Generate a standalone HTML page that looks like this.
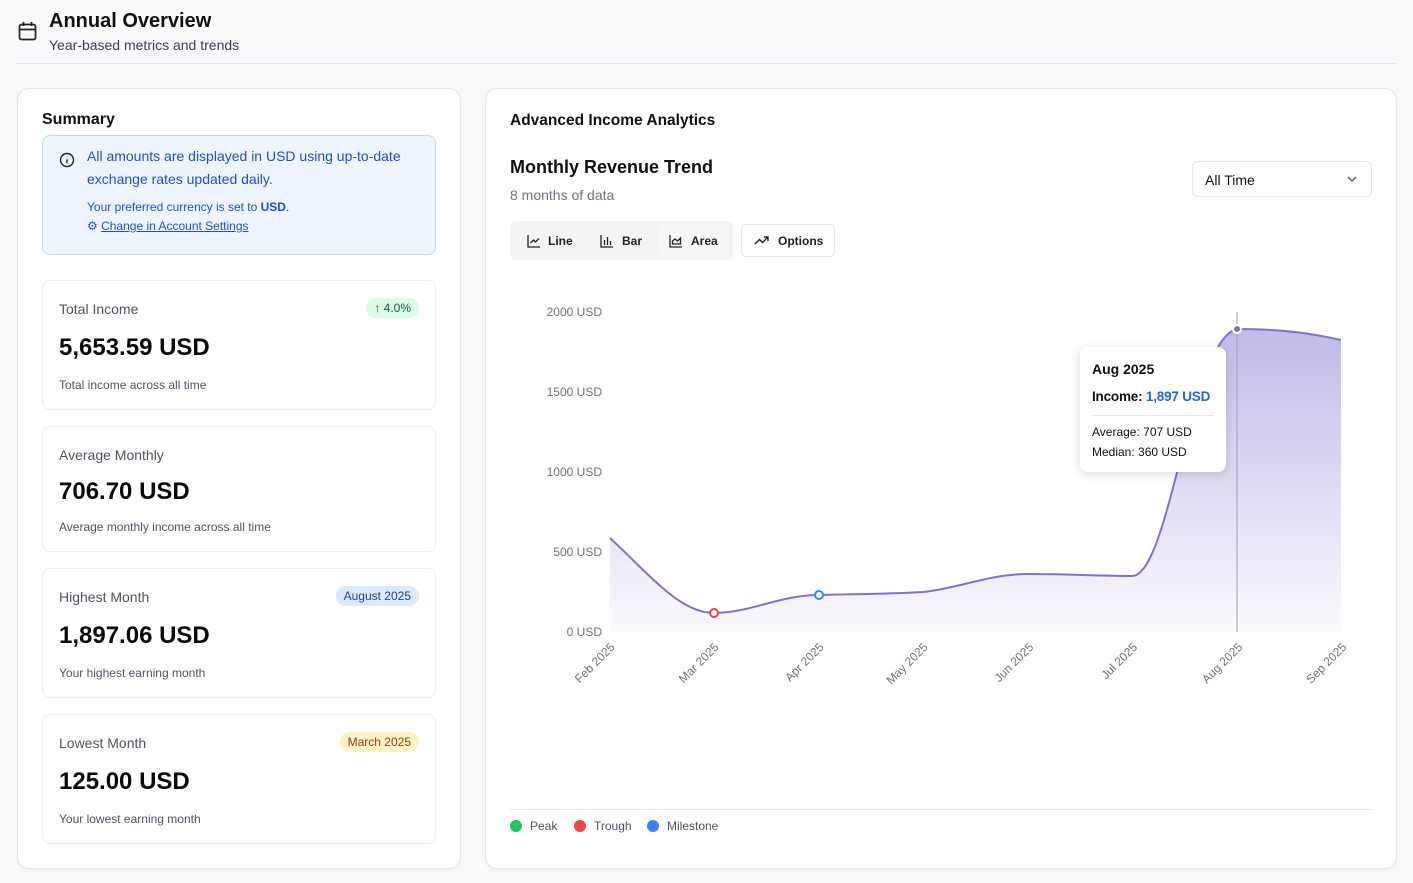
<!DOCTYPE html>
<html><head><meta charset="utf-8"><style>
*{box-sizing:border-box;margin:0;padding:0}
body{width:1413px;height:883px;background:#f9fafb;font-family:"Liberation Sans",sans-serif;color:#111;position:relative;overflow:hidden}
.abs{position:absolute}
.card{position:absolute;background:#fff;border:1px solid #e5e7eb;border-radius:12px;box-shadow:0 1px 3px rgba(0,0,0,.05)}
.stat{position:absolute;left:42px;width:394px;background:#fff;border:1px solid #eceef1;border-radius:8px}
.stat .l{position:absolute;left:16px;top:20px;font-size:14px;color:#4b5563}
.stat .v{position:absolute;left:16px;top:53px;font-size:24px;font-weight:bold;color:#0a0a0a}
.stat .d{position:absolute;left:16px;top:97px;font-size:12px;color:#4b5563}
.badge{position:absolute;right:16px;top:17px;font-size:12px;padding:3px 8px;border-radius:10px}
.ax{position:absolute;font-size:12px;color:#6b7280}
.xl{position:absolute;font-size:12px;color:#6b7280;transform:rotate(-45deg);transform-origin:right top;white-space:nowrap}
</style></head><body>
<svg class="abs" style="left:18px;top:21px" width="19" height="20" viewBox="0 0 19 20" fill="none" stroke="#222" stroke-width="1.7"><rect x="1.5" y="3.5" width="16" height="15" rx="2"/><path d="M1.5 8.5h16M5.5 1v4M13.5 1v4"/></svg>
<div class="abs" style="left:49px;top:10px;font-size:20px;font-weight:bold">Annual Overview</div>
<div class="abs" style="left:49px;top:37px;font-size:14px;color:#374151">Year-based metrics and trends</div>
<div class="abs" style="left:16px;top:63px;width:1381px;height:1px;background:#e5e7eb"></div>

<div class="card" style="left:17px;top:88px;width:444px;height:781px"></div>
<div class="abs" style="left:42px;top:111px;font-size:16px;font-weight:bold">Summary</div>
<div class="abs" style="left:42px;top:135px;width:394px;height:120px;background:#eef5fe;border:1px solid #bcd6f6;border-radius:8px"></div>
<svg class="abs" style="left:59px;top:152px" width="16" height="16" viewBox="0 0 16 16" fill="none" stroke="#222" stroke-width="1.4"><circle cx="8" cy="8" r="6.5"/><path d="M8 7.3v4M8 4.8v.5"/></svg>
<div class="abs" style="left:87px;top:145px;width:340px;font-size:14px;line-height:23px;color:#1d4ed8">All amounts are displayed in USD using up-to-date exchange rates updated daily.</div>
<div class="abs" style="left:87px;top:200px;font-size:12px;color:#1d4ed8">Your preferred currency is set to <b>USD</b>.</div>
<div class="abs" style="left:87px;top:219px;font-size:12px;color:#1d4ed8">⚙ <u>Change in Account Settings</u></div>

<div class="stat" style="top:280px;height:130px"><div class="l">Total Income</div><div class="badge" style="background:#dcfce7;color:#166534">↑ 4.0%</div><div class="v">5,653.59 USD</div><div class="d">Total income across all time</div></div>
<div class="stat" style="top:426px;height:126px"><div class="l">Average Monthly</div><div class="v" style="top:51px">706.70 USD</div><div class="d" style="top:93px">Average monthly income across all time</div></div>
<div class="stat" style="top:568px;height:130px"><div class="l">Highest Month</div><div class="badge" style="background:#dbeafe;color:#1e40af">August 2025</div><div class="v">1,897.06 USD</div><div class="d">Your highest earning month</div></div>
<div class="stat" style="top:714px;height:130px"><div class="l">Lowest Month</div><div class="badge" style="background:#fef3c7;color:#92400e">March 2025</div><div class="v">125.00 USD</div><div class="d">Your lowest earning month</div></div>

<div class="card" style="left:485px;top:88px;width:912px;height:781px"></div>
<div class="abs" style="left:510px;top:112px;font-size:15.5px;font-weight:bold">Advanced Income Analytics</div>
<div class="abs" style="left:510px;top:157px;font-size:18px;font-weight:bold;color:#111">Monthly Revenue Trend</div>
<div class="abs" style="left:510px;top:187px;font-size:14px;color:#6b7280">8 months of data</div>
<div class="abs" style="left:1192px;top:161px;width:180px;height:36px;border:1px solid #e5e7eb;border-radius:6px;background:#fff"><span style="position:absolute;left:12px;top:10px;font-size:14px">All Time</span><svg style="position:absolute;right:14px;top:14px" width="10" height="6" viewBox="0 0 10 6" fill="none" stroke="#555" stroke-width="1.4"><path d="M1 1l4 4 4-4"/></svg></div>
<div class="abs" style="left:510px;top:221px;width:223px;height:39px;background:#f3f4f6;border-radius:6px"></div>
<div class="abs" style="left:658px;top:224px;width:72px;height:33px;background:#f7f7f8;border-radius:5px"></div>
<svg class="abs" style="left:527px;top:234px" width="14" height="14" viewBox="0 0 14 14" fill="none" stroke="#222" stroke-width="1.3"><path d="M1 1v12h12M3.5 9l3-3 2 2 3.5-3.5"/></svg>
<div class="abs" style="left:548px;top:234px;font-size:12px;font-weight:bold;color:#222">Line</div>
<svg class="abs" style="left:600px;top:234px" width="14" height="14" viewBox="0 0 14 14" fill="none" stroke="#222" stroke-width="1.3"><path d="M1 1v12h12M4.5 6v5M7.5 3v8M10.5 7v4"/></svg>
<div class="abs" style="left:622px;top:234px;font-size:12px;font-weight:bold;color:#222">Bar</div>
<svg class="abs" style="left:669px;top:234px" width="14" height="14" viewBox="0 0 14 14" fill="none" stroke="#222" stroke-width="1.3"><path d="M1 1v12h12M3.5 10V7l2.5-2 2.5 2 3-3v6z"/></svg>
<div class="abs" style="left:691px;top:234px;font-size:12px;font-weight:bold;color:#222">Area</div>
<div class="abs" style="left:741px;top:224px;width:94px;height:33px;border:1px solid #e5e7eb;border-radius:5px;background:#fff"></div>
<svg class="abs" style="left:754px;top:235px" width="16" height="11" viewBox="0 0 16 11" fill="none" stroke="#222" stroke-width="1.4"><path d="M1 9l4.5-4.5 3 3L14 2M10 2h4v4"/></svg>
<div class="abs" style="left:778px;top:234px;font-size:12px;font-weight:bold;color:#222">Options</div>

<div class="ax" style="right:811px;top:305px">2000 USD</div>
<div class="ax" style="right:811px;top:385px">1500 USD</div>
<div class="ax" style="right:811px;top:465px">1000 USD</div>
<div class="ax" style="right:811px;top:545px">500 USD</div>
<div class="ax" style="right:811px;top:625px">0 USD</div>
<svg class="abs" style="left:0;top:0" width="1413" height="883">
<defs><linearGradient id="g" x1="0" y1="0" x2="0" y2="1"><stop offset="0" stop-color="#8b84d7" stop-opacity=".55"/><stop offset="1" stop-color="#8b84d7" stop-opacity=".04"/></linearGradient></defs>
<path d="M610 538 C650 575,680 613,714 613 C750 613,780 595,819 595 C860 594,890 594,923 592 C960 588,990 574,1028 574 C1070 574,1100 576,1132 576 C1170 576,1190 340,1237 329 C1280 329,1310 333,1341 340 L1341 632 L610 632Z" fill="url(#g)"/>
<path d="M610 538 C650 575,680 613,714 613 C750 613,780 595,819 595 C860 594,890 594,923 592 C960 588,990 574,1028 574 C1070 574,1100 576,1132 576 C1170 576,1190 340,1237 329 C1280 329,1310 333,1341 340" fill="none" stroke="#7c74d1" stroke-width="2"/>
<line x1="1237" y1="312" x2="1237" y2="632" stroke="#9ca3af" stroke-width="1"/>
<circle cx="714" cy="613" r="4" fill="#fff" stroke="#ef4444" stroke-width="2"/>
<circle cx="819" cy="595" r="4" fill="#fff" stroke="#3b82f6" stroke-width="2"/>
<circle cx="1237" cy="329" r="4" fill="#7c74d1" stroke="#fff" stroke-width="2"/>
</svg>
<div class="abs" style="left:1080px;top:347px;width:146px;height:125px;background:#fff;border-radius:8px;box-shadow:0 2px 10px rgba(0,0,0,.15)">
<div style="position:absolute;left:12px;top:14px;font-size:14px;font-weight:bold">Aug 2025</div>
<div style="position:absolute;left:12px;top:42px;font-size:13.5px;font-weight:bold;white-space:nowrap;letter-spacing:-.2px">Income: <span style="color:#2563eb">1,897 USD</span></div>
<div style="position:absolute;left:12px;top:68px;width:122px;height:1px;background:#e5e7eb"></div>
<div style="position:absolute;left:12px;top:75px;font-size:12px;line-height:20px">Average: 707 USD<br>Median: 360 USD</div>
</div>
<div class="xl" style="right:805px;top:640px">Feb 2025</div>
<div class="xl" style="right:701px;top:640px">Mar 2025</div>
<div class="xl" style="right:596px;top:640px">Apr 2025</div>
<div class="xl" style="right:492px;top:640px">May 2025</div>
<div class="xl" style="right:387px;top:640px">Jun 2025</div>
<div class="xl" style="right:283px;top:640px">Jul 2025</div>
<div class="xl" style="right:178px;top:640px">Aug 2025</div>
<div class="xl" style="right:74px;top:640px">Sep 2025</div>

<div class="abs" style="left:510px;top:809px;width:862px;height:1px;background:#e5e7eb"></div>
<div class="abs" style="left:510px;top:820px;width:12px;height:12px;border-radius:6px;background:#22c55e"></div>
<div class="abs" style="left:530px;top:819px;font-size:12px;color:#4b5563">Peak</div>
<div class="abs" style="left:574px;top:820px;width:12px;height:12px;border-radius:6px;background:#ef4444"></div>
<div class="abs" style="left:594px;top:819px;font-size:12px;color:#4b5563">Trough</div>
<div class="abs" style="left:647px;top:820px;width:12px;height:12px;border-radius:6px;background:#3b82f6"></div>
<div class="abs" style="left:667px;top:819px;font-size:12px;color:#4b5563">Milestone</div>
</body></html>
